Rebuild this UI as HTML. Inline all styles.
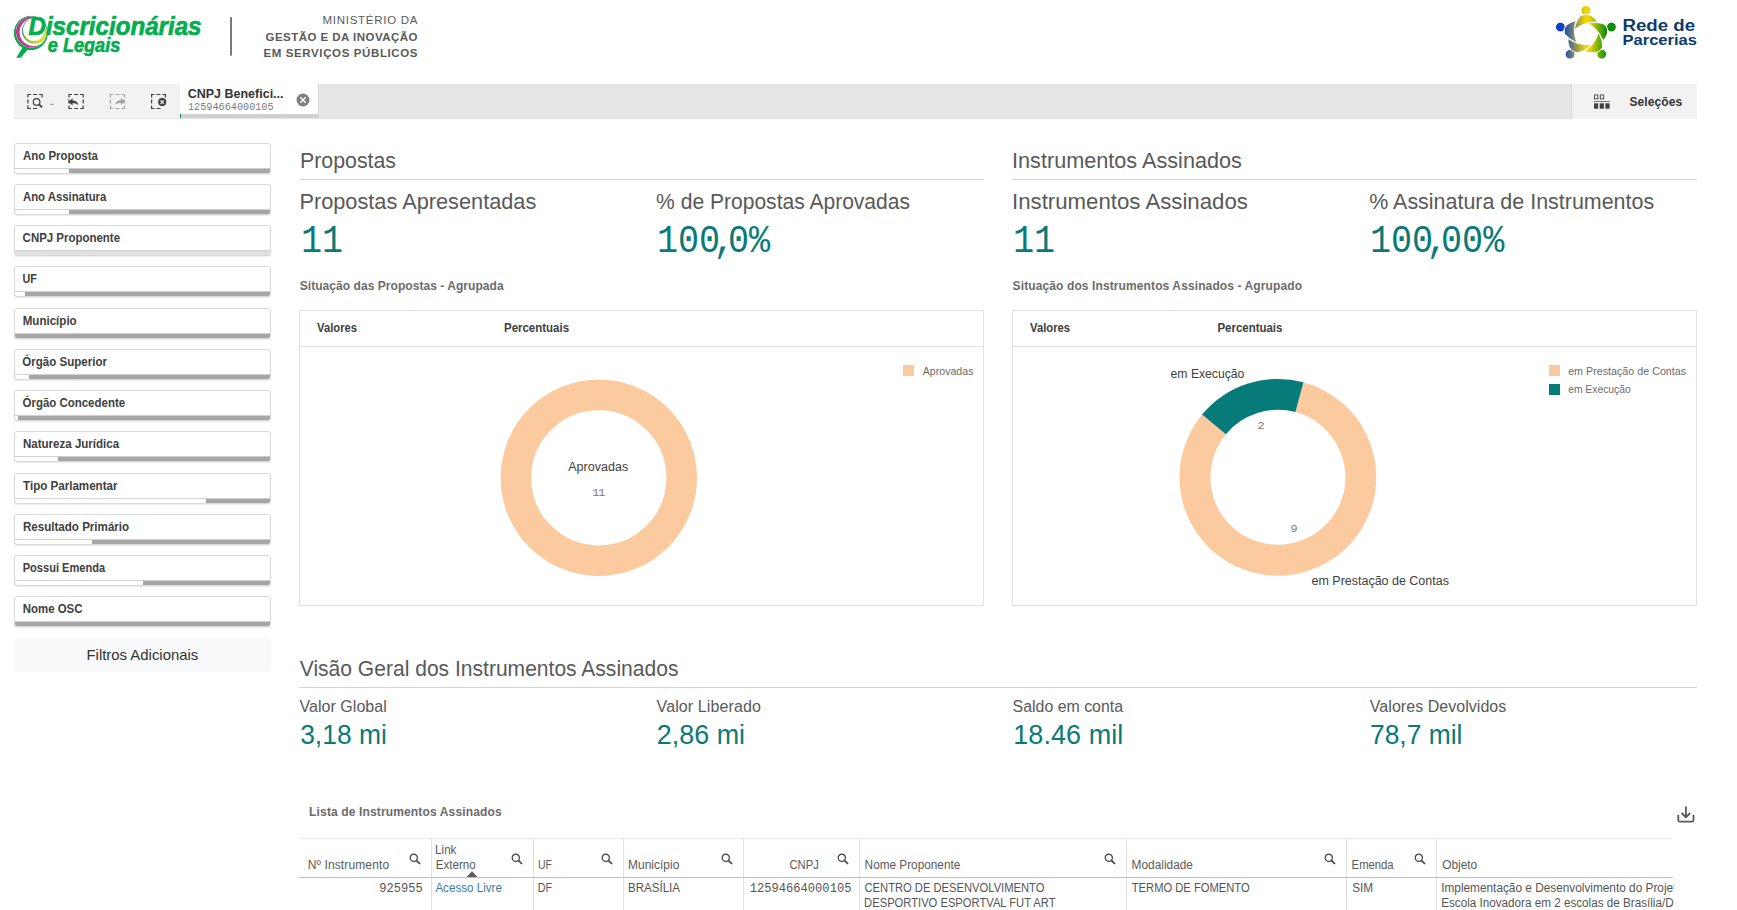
<!DOCTYPE html>
<html lang="pt-BR">
<head>
<meta charset="utf-8">
<title>Discricionárias e Legais - Rede de Parcerias</title>
<style>
html,body{margin:0;padding:0;background:#fff;}
body{width:1737px;height:910px;overflow:hidden;position:relative;font-family:"Liberation Sans",sans-serif;color:#404040;}
.abs{position:absolute;white-space:nowrap;}
.sx{display:inline-block;transform-origin:0 50%;white-space:nowrap;}

/* header */
#hdr{position:absolute;left:0;top:0;width:1737px;height:84px;}
.min{position:absolute;right:1320px;text-align:right;white-space:nowrap;color:#595959;font-size:12px;letter-spacing:1.1px;line-height:14px;}
.min b{font-weight:bold;}

/* toolbar */
#tb{position:absolute;left:14px;top:84px;width:1683px;height:35px;background:#e6e6e6;border-bottom:1px solid #dfe3e6;box-sizing:border-box;}
#tb .icons{position:absolute;left:0;top:0;width:166px;height:34px;background:#f2f2f2;}
#tb .tab{position:absolute;left:166px;top:0;width:139px;height:34px;background:#fff;border-right:1px solid #d9d9d9;box-sizing:border-box;}
#tb .tab .bar{position:absolute;left:0;bottom:0;width:100%;height:4px;background:#d0d0d0;}
#tb .tab .bar i{position:absolute;left:0;top:0;width:1px;height:4px;background:#009845;}
#tb .tab .t1{position:absolute;left:8px;top:3px;font-weight:bold;font-size:12.5px;color:#333;white-space:nowrap;}
#tb .tab .t2{position:absolute;left:8px;top:17.6px;font-family:"Liberation Mono",monospace;font-size:10.2px;color:#7a7a7a;white-space:nowrap;}
#tb .sel{position:absolute;right:0;top:0;width:126px;height:35px;background:#f2f2f2;border-left:1px solid #d9d9d9;box-sizing:border-box;}
#tb .sel>span{position:absolute;left:57px;top:10.5px;font-weight:bold;font-size:12px;color:#333;white-space:nowrap;}

/* sidebar */
.fb{position:absolute;left:14px;width:257px;height:31px;box-sizing:border-box;border:1px solid #d9d9d9;border-radius:3px;background:#fff;overflow:hidden;box-shadow:0 1px 1px rgba(0,0,0,.08);}
.fb .l{position:absolute;left:8px;top:5px;font-weight:bold;font-size:12px;color:#404040;white-space:nowrap;}
.fb .b{position:absolute;left:0;right:0;bottom:0;height:4px;background:#a6a6a6;border-top:1px solid #d0d0d0;}
.fb .b i{position:absolute;left:0;top:0;height:4px;background:#fff;}
#fa{position:absolute;left:14px;top:638px;width:257px;height:34px;background:#f8f9fa;border-radius:4px;text-align:center;line-height:34px;font-size:15px;color:#333;}

/* sections */
.st{position:absolute;font-size:22.7px;color:#595959;white-space:nowrap;}
.hr{position:absolute;height:1px;background:#d4d4d4;}
.kl{position:absolute;font-size:22.7px;color:#595959;white-space:nowrap;}
.kv{position:absolute;font-family:"Liberation Mono",monospace;font-size:38.5px;color:#0a7a78;white-space:nowrap;}
.kv .sx{transform:translateX(0.9px) scaleX(.913);}
.kv .cm{margin:0 -7.3px;}
.sub{position:absolute;font-size:12px;font-weight:bold;color:#6b6b6b;white-space:nowrap;}
.box{position:absolute;box-sizing:border-box;border:1px solid #e0e0e0;background:#fff;}
.box .th{position:absolute;left:0;top:0;right:0;height:36px;border-bottom:1px solid #e0e0e0;box-sizing:border-box;}
.box .th>span{position:absolute;top:10px;font-weight:bold;font-size:12px;color:#404040;white-space:nowrap;}
.lg{position:absolute;font-size:11px;color:#6b6b6b;white-space:nowrap;}
.lg i{position:absolute;left:-19px;top:1px;width:11px;height:11px;}
.dl{position:absolute;font-size:12.5px;color:#404040;white-space:nowrap;}
.dv{position:absolute;font-family:"Liberation Mono",monospace;font-size:11.8px;color:#787878;white-space:nowrap;}

.k2l{position:absolute;font-size:16px;color:#595959;white-space:nowrap;}
.k2v{position:absolute;font-size:27px;color:#0a7a78;white-space:nowrap;}

/* table */
#tbl{position:absolute;left:299px;top:838px;width:1374.7px;height:72px;overflow:hidden;font-size:12px;color:#555;}
#tbl .vl{position:absolute;top:0;width:1px;height:72px;background:#e0e0e0;}
#tbl .hl{position:absolute;left:0;top:39px;width:1374px;height:1px;background:#bdbdbd;}
#tbl .tl{position:absolute;left:0;top:0;width:1374px;height:1px;background:#ececec;}
#tbl .h{position:absolute;white-space:nowrap;color:#595959;}
#tbl .c{position:absolute;white-space:nowrap;}
#tbl .m{font-family:"Liberation Mono",monospace;font-size:12.1px;}
#tbl svg.s{position:absolute;top:14.6px;margin-left:-0.5px;}
</style>
</head>
<body>
<div id="hdr">
<svg width="1737" height="84" viewBox="0 0 1737 84" style="position:absolute;left:0;top:0">
<defs>
<linearGradient id="gstar" gradientUnits="userSpaceOnUse" x1="1557" y1="0" x2="1614" y2="0">
<stop offset="0" stop-color="#0b3fc6"/><stop offset="0.12" stop-color="#1446c0"/><stop offset="0.5" stop-color="#f4d500"/><stop offset="0.58" stop-color="#e6d400"/><stop offset="0.86" stop-color="#12900f"/><stop offset="1" stop-color="#0a8a0a"/>
</linearGradient>
<linearGradient id="gyl" gradientUnits="userSpaceOnUse" x1="23" y1="24" x2="46" y2="38">
<stop offset="0" stop-color="#0a7a6a"/><stop offset="0.45" stop-color="#8cc63f"/><stop offset="1" stop-color="#e9e21c"/>
</linearGradient>
</defs>
<!-- magnifier logo -->
<clipPath id="cpo"><circle cx="30.9" cy="33" r="17.2"/></clipPath>
<clipPath id="cpm"><circle cx="31.4" cy="32" r="15.5"/></clipPath>
<clipPath id="cpy"><polygon points="18,24.5 27.5,18 34.7,31 51,28 51,48 18,48"/></clipPath>
<path fill="#04ad50" fill-rule="evenodd" clip-path="url(#cpo)" d="M13.70,33 a17.2,17.2 0 1 0 34.40,0 a17.2,17.2 0 1 0 -34.40,0Z M15.90,32 a15.5,15.5 0 1 1 31.00,0 a15.5,15.5 0 1 1 -31.00,0Z"/>
<path fill="#c4368f" fill-rule="evenodd" clip-path="url(#cpm)" d="M15.90,32 a15.5,15.5 0 1 0 31.00,0 a15.5,15.5 0 1 0 -31.00,0Z M19.60,32.2 a14.0,14.0 0 1 1 28.00,0 a14.0,14.0 0 1 1 -28.00,0Z"/>
<path fill="url(#gyl)" fill-rule="evenodd" clip-path="url(#cpy)" d="M22.00,31.0 a12.7,12.7 0 1 0 25.40,0 a12.7,12.7 0 1 0 -25.40,0Z M23.00,30.0 a11.0,11.0 0 1 1 22.00,0 a11.0,11.0 0 1 1 -22.00,0Z"/>
<polygon fill="#04ad50" points="23.2,46.6 28.2,49 20.9,57.8 16.2,57.8"/>
<text x="28.5" y="34.8" font-family="'Liberation Sans',sans-serif" font-weight="bold" font-style="italic" font-size="26.5" fill="#04ad50" stroke="#04ad50" stroke-width="0.7" textLength="173" lengthAdjust="spacingAndGlyphs">Discricionárias</text>
<text x="47.8" y="51.7" font-family="'Liberation Sans',sans-serif" font-weight="bold" font-style="italic" font-size="19.3" fill="#04ad50" stroke="#04ad50" stroke-width="0.6" textLength="72.5" lengthAdjust="spacingAndGlyphs">e Legais</text>
<rect x="230.2" y="17.2" width="1.6" height="38.4" fill="#595959"/>
<!-- ministerio -->
<g font-family="'Liberation Sans',sans-serif" fill="#5a5a5a" text-anchor="end">
<text x="417.5" y="24.3" font-size="11.5" textLength="95" lengthAdjust="spacing">MINISTÉRIO DA</text>
<text x="417.5" y="40.6" font-size="11.5" font-weight="bold" textLength="152" lengthAdjust="spacing">GESTÃO E DA INOVAÇÃO</text>
<text x="417.5" y="57" font-size="11.5" font-weight="bold" textLength="154" lengthAdjust="spacing">EM SERVIÇOS PÚBLICOS</text>
</g>
<!-- rede de parcerias -->
<g fill="url(#gstar)" stroke="#fff" stroke-width="1">
<circle cx="1585.9" cy="10.4" r="4.9"/>
<path d="M1580.6,15.6 Q1585.9,12.8 1591.2,15.6 Q1595.4,18.3 1597.9,22.0 C1589.2,22.0 1581.7,24.0 1574.1,30.0 Q1575.7,20.6 1580.6,15.6Z"/>
<circle cx="1611.4" cy="27.1" r="4.9"/>
<path d="M1604.3,24.2 Q1608.9,27.9 1607.6,33.3 Q1606.1,37.7 1602.9,41.0 C1600.2,33.6 1595.8,27.7 1587.1,23.1 Q1597.5,21.5 1604.3,24.2Z"/>
<circle cx="1601.7" cy="54.2" r="4.9"/>
<path d="M1602.6,47.1 Q1600.1,52.2 1594.0,52.8 Q1588.8,52.8 1584.4,51.1 C1591.4,46.6 1596.2,40.9 1598.4,32.1 Q1603.3,40.5 1602.6,47.1Z"/>
<circle cx="1570.1" cy="54.2" r="4.9"/>
<path d="M1577.8,52.8 Q1571.7,52.2 1569.2,47.1 Q1567.5,42.7 1568.0,38.4 C1575.0,43.0 1582.4,45.4 1592.4,44.6 Q1585.0,51.3 1577.8,52.8Z"/>
<circle cx="1560.4" cy="27.1" r="4.9"/>
<path d="M1564.2,33.3 Q1562.9,27.9 1567.5,24.2 Q1571.6,21.4 1576.3,20.4 C1573.6,27.9 1573.4,34.9 1577.4,43.3 Q1568.0,39.0 1564.2,33.3Z"/>
</g>
<g font-family="'Liberation Sans',sans-serif" font-weight="bold" fill="#0c3b70">
<text x="1622.5" y="30.9" font-size="16" textLength="72.5" lengthAdjust="spacingAndGlyphs">Rede de</text>
<text x="1622.5" y="45.3" font-size="15.2" textLength="74.5" lengthAdjust="spacingAndGlyphs">Parcerias</text>
</g>
</svg>
</div>
<div id="tb">
<div class="icons">
<svg width="166" height="34" viewBox="14 84 166 34" style="position:absolute;left:0;top:0">
<g fill="none" stroke="#404040" stroke-width="1.2">
<path d="M42.1,97.4 V94.5 H39.2 M37.1,94.5 H33.1 M31,94.5 H27.9 V97.4 M27.9,99.5 V103.5 M27.9,105.6 V108.5 H31 M33.1,108.5 H37.1"/>
<rect x="69" y="94.5" width="14.2" height="14" stroke-dasharray="6 2.1 4 2.1" stroke-dashoffset="3" pathLength="56.8"/>
<rect x="110.4" y="94.5" width="14" height="14" stroke-dasharray="6 2.1 4 2.1" stroke-dashoffset="3" pathLength="56.8" stroke="#a6a6a6"/>
<path d="M165.4,97.4 V94.5 H162.5 M160.4,94.5 H156.4 M154.4,94.5 H151.6 V97.4 M151.6,99.5 V103.5 M151.6,105.6 V108.5 H154.5 M156.4,108.5 H160.6"/>
</g>
<circle cx="36.6" cy="101.9" r="3.3" fill="none" stroke="#404040" stroke-width="1.2"/>
<path d="M39,104.4 L42,107.4" stroke="#404040" stroke-width="1.9" fill="none"/>
<rect x="50.3" y="103.8" width="3.2" height="1" fill="#8a8a8a"/>
<path d="M68.4,101.9 L72.6,98.3 V100.5 C75.9,100.5 77.9,102 78.3,105.2 C77,103.7 75.4,103.3 72.6,103.3 V105.4 Z" fill="#404040"/>
<path d="M125.1,101.6 L120.9,98 V100.2 C117.6,100.2 115.6,101.7 115.2,104.9 C116.5,103.4 118.1,103 120.9,103 V105.1 Z" fill="#a0a0a0"/>
<circle cx="162.2" cy="102.1" r="4.1" fill="#404040"/>
<path d="M160.5,100.4 L163.9,103.8 M163.9,100.4 L160.5,103.8" stroke="#f2f2f2" stroke-width="1.2"/>
</svg>
</div>
<div class="tab">
<div class="t1"><span class="sx" id="tabt" style="transform:translateX(-0.25px) scaleX(0.9990)">CNPJ Benefici...</span></div>
<div class="t2">12594664000105</div>
<svg width="14" height="14" viewBox="0 0 14 14" style="position:absolute;left:115.8px;top:9px"><circle cx="7" cy="7" r="6.5" fill="#7f7f7f"/><path d="M4.3,4.3 L9.7,9.7 M9.7,4.3 L4.3,9.7" stroke="#fff" stroke-width="1.4"/></svg>
<div class="bar"><i></i></div>
</div>
<div class="sel">
<svg width="18" height="16" viewBox="0 0 18 16" style="position:absolute;left:21.3px;top:10px">
<rect x="1.5" y="0.9" width="3.4" height="4" fill="none" stroke="#404040" stroke-width="0.9"/>
<rect x="7.3" y="0.9" width="3.4" height="4" fill="none" stroke="#404040" stroke-width="0.9"/>
<rect x="1" y="7" width="15.6" height="0.8" fill="#595959"/>
<rect x="1" y="9.3" width="4.2" height="5.4" fill="#404040"/>
<rect x="6.7" y="9.3" width="4.2" height="5.4" fill="#404040"/>
<rect x="12.4" y="9.3" width="4.2" height="5.4" fill="#404040"/>
</svg>
<span><span class="sx" id="selt" style="letter-spacing:0.09px;transform:translateX(0.40px)">Seleções</span></span>
</div>
</div>
<div id="side">
<div class="fb" style="top:143px"><div class="l"><span class="sx" style="transform:scaleX(0.9519)">Ano Proposta</span></div><div class="b"><i style="width:54px"></i></div></div>
<div class="fb" style="top:184px"><div class="l"><span class="sx" style="transform:translateX(-0.05px) scaleX(0.9449)">Ano Assinatura</span></div><div class="b"><i style="width:54px"></i></div></div>
<div class="fb" style="top:225px"><div class="l"><span class="sx" style="transform:translateX(-0.40px) scaleX(0.9549)">CNPJ Proponente</span></div><div class="b" style="background:#e0e0e0"></div></div>
<div class="fb" style="top:266px"><div class="l"><span class="sx" style="transform:translateX(-0.50px) scaleX(0.9000)">UF</span></div><div class="b"><i style="width:10px"></i></div></div>
<div class="fb" style="top:308px"><div class="l"><span class="sx" style="transform:translateX(-0.25px) scaleX(0.9625)">Município</span></div><div class="b"><i style="width:0px"></i></div></div>
<div class="fb" style="top:349px"><div class="l"><span class="sx" style="transform:translateX(-0.75px) scaleX(0.9625)">Órgão Superior</span></div><div class="b"><i style="width:14px"></i></div></div>
<div class="fb" style="top:390px"><div class="l"><span class="sx" style="transform:translateX(-0.50px) scaleX(0.9556)">Órgão Concedente</span></div><div class="b"><i style="width:3px"></i></div></div>
<div class="fb" style="top:431px"><div class="l"><span class="sx" style="transform:translateX(-0.10px) scaleX(0.9624)">Natureza Jurídica</span></div><div class="b"><i style="width:43px"></i></div></div>
<div class="fb" style="top:473px"><div class="l"><span class="sx" style="transform:translateX(0.11px) scaleX(0.9646)">Tipo Parlamentar</span></div><div class="b"><i style="width:191px"></i></div></div>
<div class="fb" style="top:514px"><div class="l"><span class="sx" style="transform:translateX(-0.10px) scaleX(0.9655)">Resultado Primário</span></div><div class="b"><i style="width:77px"></i></div></div>
<div class="fb" style="top:555px"><div class="l"><span class="sx" style="transform:translateX(-0.25px) scaleX(0.9211)">Possui Emenda</span></div><div class="b"><i style="width:128px"></i></div></div>
<div class="fb" style="top:596px"><div class="l"><span class="sx" style="transform:translateX(-0.20px) scaleX(0.9524)">Nome OSC</span></div><div class="b"><i style="width:0px"></i></div></div>
<div id="fa"><span class="sx" style="transform:translateX(0.10px) scaleX(0.9929);transform-origin:50% 50%">Filtros Adicionais</span></div>
</div>
<div id="main">
<div class="st" style="left:300px;top:147.2px"><span class="sx" style="transform:translateX(0.01px) scaleX(0.9396)">Propostas</span></div>
<div class="hr" style="left:299px;top:179px;width:685px"></div>
<div class="kl" style="left:300px;top:188.1px"><span class="sx" style="transform:translateX(-0.58px) scaleX(0.9583)">Propostas Apresentadas</span></div>
<div class="kv" style="left:300px;top:220px"><span class="sx">11</span></div>
<div class="kl" style="left:656px;top:188.1px"><span class="sx" style="transform:translateX(0.12px) scaleX(0.9277)">% de Propostas Aprovadas</span></div>
<div class="kv" style="left:656px;top:220px"><span class="sx">100<span class="cm">,</span>0%</span></div>
<div class="sub" style="left:300px;top:279px"><span class="sx" style="letter-spacing:0.05px;transform:translateX(-0.25px)">Situação das Propostas - Agrupada</span></div>
<div class="box" style="left:299px;top:310px;width:685px;height:296px"><div class="th"><span style="left:17px"><span class="sx" style="transform:translateX(0.12px) scaleX(0.9360)">Valores</span></span><span style="left:204px"><span class="sx" style="transform:scaleX(0.9559)">Percentuais</span></span></div></div>
<svg class="abs" style="left:299px;top:346px" width="686" height="259" viewBox="299 346 686 259">
<circle cx="598.8" cy="477.8" r="82.9" fill="none" stroke="#fbcb9f" stroke-width="30.6"/>
</svg>
<div class="dl" style="left:568px;top:459.7px"><span class="sx" style="letter-spacing:0.05px;transform:translateX(0.20px)">Aprovadas</span></div>
<div class="dv" style="left:592.2px;top:485.6px;letter-spacing:-0.9px">11</div>
<div class="lg" style="left:922px;top:364.7px"><i style="background:#fbcb9f;top:0.3px"></i><span class="sx" style="transform:translateX(0.70px) scaleX(0.9660)">Aprovadas</span></div>
<div class="st" style="left:1012px;top:147.2px"><span class="sx" style="transform:translateX(0.05px) scaleX(0.9542)">Instrumentos Assinados</span></div>
<div class="hr" style="left:1012px;top:179px;width:685px"></div>
<div class="kl" style="left:1012px;top:188.1px"><span class="sx" style="transform:translateX(0.02px) scaleX(0.9792)">Instrumentos Assinados</span></div>
<div class="kv" style="left:1012px;top:220px"><span class="sx">11</span></div>
<div class="kl" style="left:1369px;top:188.1px"><span class="sx" style="transform:translateX(0.25px) scaleX(0.9452)">% Assinatura de Instrumentos</span></div>
<div class="kv" style="left:1369px;top:220px"><span class="sx">100<span class="cm">,</span>00%</span></div>
<div class="sub" style="left:1012px;top:279px"><span class="sx" style="letter-spacing:0.11px;transform:translateX(0.60px)">Situação dos Instrumentos Assinados - Agrupado</span></div>
<div class="box" style="left:1012px;top:310px;width:685px;height:296px"><div class="th"><span style="left:17px"><span class="sx" style="transform:translateX(0.05px) scaleX(0.9372)">Valores</span></span><span style="left:204px"><span class="sx" style="transform:translateX(0.40px) scaleX(0.9559)">Percentuais</span></span></div></div>
<svg class="abs" style="left:1012px;top:346px" width="686" height="259" viewBox="1012 346 686 259">
<path d="M1303.45,382.28 A98.4,98.4 0 1 1 1202.08,414.58 L1225.89,434.28 A67.5,67.5 0 1 0 1295.43,412.12Z" fill="#fbcb9f"/>
<path d="M1202.08,414.58 A98.4,98.4 0 0 1 1303.45,382.28 L1295.43,412.12 A67.5,67.5 0 0 0 1225.89,434.28Z" fill="#077b79"/>
</svg>
<div class="dl" style="left:1170px;top:367px"><span class="sx" style="transform:translateX(0.60px) scaleX(0.9737)">em Execução</span></div>
<div class="dl" style="left:1311px;top:573.7px"><span class="sx" style="transform:translateX(0.50px) scaleX(0.9986)">em Prestação de Contas</span></div>
<div class="dv" style="left:1257.6px;top:418.6px">2</div>
<div class="dv" style="left:1290.6px;top:521.8px">9</div>
<div class="lg" style="left:1568px;top:364.7px"><i style="background:#fbcb9f;top:0.3px"></i><span class="sx" style="transform:translateX(0.15px) scaleX(0.9744)">em Prestação de Contas</span></div>
<div class="lg" style="left:1568px;top:382.6px"><i style="background:#077b79;top:1.4px"></i><span class="sx" style="transform:translateX(0.15px) scaleX(0.9388)">em Execução</span></div>
<div class="st" style="left:300px;top:655.3px"><span class="sx" style="transform:translateX(-0.25px) scaleX(0.9277)">Visão Geral dos Instrumentos Assinados</span></div>
<div class="hr" style="left:299px;top:687px;width:1398px"></div>
<div class="k2l" style="left:300px;top:697.5px"><span class="sx" style="letter-spacing:0.02px;transform:translateX(-0.38px)">Valor Global</span></div>
<div class="k2v" style="left:300px;top:719.6px"><span class="sx" style="transform:translateX(0.15px) scaleX(0.9797)">3,18 mi</span></div>
<div class="k2l" style="left:656px;top:697.5px"><span class="sx" style="letter-spacing:0.10px;transform:translateX(0.62px)">Valor Liberado</span></div>
<div class="k2v" style="left:656px;top:719.6px"><span class="sx" style="transform:translateX(0.85px) scaleX(0.9965)">2,86 mi</span></div>
<div class="k2l" style="left:1012px;top:697.5px"><span class="sx" style="transform:translateX(0.62px) scaleX(0.9933)">Saldo em conta</span></div>
<div class="k2v" style="left:1012px;top:719.6px"><span class="sx" style="letter-spacing:0.06px;transform:translateX(1.25px)">18.46 mil</span></div>
<div class="k2l" style="left:1369px;top:697.5px"><span class="sx" style="letter-spacing:0.04px;transform:translateX(0.85px)">Valores Devolvidos</span></div>
<div class="k2v" style="left:1369px;top:719.6px"><span class="sx" style="transform:translateX(1.00px) scaleX(0.9777)">78,7 mil</span></div>
<div class="sub" style="left:309px;top:805px"><span class="sx" style="letter-spacing:0.14px;transform:translateX(0.12px)">Lista de Instrumentos Assinados</span></div>
<svg class="abs" style="left:1676px;top:804px" width="20" height="20" viewBox="0 0 20 20"><g fill="none" stroke="#595959" stroke-width="1.8" stroke-linejoin="round"><path d="M9.9,2.4 V13 M5.6,9 L9.9,13.3 L14.2,9"/><path d="M2.3,11 V16.2 Q2.3,17.7 3.8,17.7 H16 Q17.5,17.7 17.5,16.2 V11"/></g></svg>
<div id="tbl">
<div class="tl"></div>
<div class="vl" style="left:132px"></div>
<div class="vl" style="left:234px"></div>
<div class="vl" style="left:324px"></div>
<div class="vl" style="left:444px"></div>
<div class="vl" style="left:560px"></div>
<div class="vl" style="left:827px"></div>
<div class="vl" style="left:1047px"></div>
<div class="vl" style="left:1137px"></div>
<div class="hl"></div>
<div class="h" style="left:9px;top:20px"><span class="sx" style="letter-spacing:0.12px;transform:translateX(-0.25px)">Nº Instrumento</span></div>
<svg class="s" style="left:110px" width="12" height="12" viewBox="0 0 12 12"><circle cx="4.8" cy="4.8" r="3.6" fill="none" stroke="#404040" stroke-width="1.2"/><path d="M7.4,7.4 L11,11" stroke="#404040" stroke-width="1.7"/></svg>
<div class="h" style="left:137px;top:20px"><span class="sx" style="transform:translateX(-0.25px) scaleX(0.9643)">Externo</span></div>
<svg class="s" style="left:212px" width="12" height="12" viewBox="0 0 12 12"><circle cx="4.8" cy="4.8" r="3.6" fill="none" stroke="#404040" stroke-width="1.2"/><path d="M7.4,7.4 L11,11" stroke="#404040" stroke-width="1.7"/></svg>
<div class="h" style="left:239px;top:20px"><span class="sx" style="transform:scaleX(0.8750)">UF</span></div>
<svg class="s" style="left:302px" width="12" height="12" viewBox="0 0 12 12"><circle cx="4.8" cy="4.8" r="3.6" fill="none" stroke="#404040" stroke-width="1.2"/><path d="M7.4,7.4 L11,11" stroke="#404040" stroke-width="1.7"/></svg>
<div class="h" style="left:329px;top:20px"><span class="sx">Município</span></div>
<svg class="s" style="left:422px" width="12" height="12" viewBox="0 0 12 12"><circle cx="4.8" cy="4.8" r="3.6" fill="none" stroke="#404040" stroke-width="1.2"/><path d="M7.4,7.4 L11,11" stroke="#404040" stroke-width="1.7"/></svg>
<div class="h" style="left:490px;top:20px"><span class="sx" style="transform:translateX(0.50px) scaleX(0.9355)">CNPJ</span></div>
<svg class="s" style="left:538px" width="12" height="12" viewBox="0 0 12 12"><circle cx="4.8" cy="4.8" r="3.6" fill="none" stroke="#404040" stroke-width="1.2"/><path d="M7.4,7.4 L11,11" stroke="#404040" stroke-width="1.7"/></svg>
<div class="h" style="left:565px;top:20px"><span class="sx" style="transform:translateX(0.62px) scaleX(0.9821)">Nome Proponente</span></div>
<svg class="s" style="left:805px" width="12" height="12" viewBox="0 0 12 12"><circle cx="4.8" cy="4.8" r="3.6" fill="none" stroke="#404040" stroke-width="1.2"/><path d="M7.4,7.4 L11,11" stroke="#404040" stroke-width="1.7"/></svg>
<div class="h" style="left:832px;top:20px"><span class="sx" style="transform:translateX(0.62px) scaleX(0.9879)">Modalidade</span></div>
<svg class="s" style="left:1025px" width="12" height="12" viewBox="0 0 12 12"><circle cx="4.8" cy="4.8" r="3.6" fill="none" stroke="#404040" stroke-width="1.2"/><path d="M7.4,7.4 L11,11" stroke="#404040" stroke-width="1.7"/></svg>
<div class="h" style="left:1052px;top:20px"><span class="sx" style="transform:translateX(0.62px) scaleX(0.9389)">Emenda</span></div>
<svg class="s" style="left:1115px" width="12" height="12" viewBox="0 0 12 12"><circle cx="4.8" cy="4.8" r="3.6" fill="none" stroke="#404040" stroke-width="1.2"/><path d="M7.4,7.4 L11,11" stroke="#404040" stroke-width="1.7"/></svg>
<div class="h" style="left:1142px;top:20px"><span class="sx" style="transform:translateX(1.25px) scaleX(0.9861)">Objeto</span></div>
<div class="h" style="left:137px;top:5px"><span class="sx" style="transform:translateX(-0.88px) scaleX(0.9659)">Link</span></div>
<svg class="abs" style="left:167px;top:33px" width="12" height="6" viewBox="0 0 12 6"><path d="M0.5,6 L6,0.3 L11.5,6Z" fill="#595959"/></svg>
<div class="c m" style="left:80.3px;top:43.8px">925955</div>
<div class="c" style="left:137px;top:43px;color:#3a7ca5"><span class="sx" style="transform:translateX(-0.62px) scaleX(0.9674)">Acesso Livre</span></div>
<div class="c" style="left:239px;top:43px"><span class="sx" style="transform:translateX(-0.35px) scaleX(0.8937)">DF</span></div>
<div class="c" style="left:329px;top:43px"><span class="sx" style="transform:scaleX(0.9630)">BRASÍLIA</span></div>
<div class="c m" style="left:450.8px;top:43.8px">12594664000105</div>
<div class="c" style="left:565px;top:43px"><span class="sx" style="transform:translateX(0.50px) scaleX(0.9326)">CENTRO DE DESENVOLVIMENTO</span></div>
<div class="c" style="left:565px;top:58px"><span class="sx" style="transform:translateX(0.12px) scaleX(0.9329)">DESPORTIVO ESPORTVAL FUT ART</span></div>
<div class="c" style="left:832px;top:43px"><span class="sx" style="transform:translateX(0.75px) scaleX(0.9325)">TERMO DE FOMENTO</span></div>
<div class="c" style="left:1052px;top:43px"><span class="sx" style="transform:translateX(1.25px) scaleX(0.9762)">SIM</span></div>
<div class="c" style="left:1142px;top:43px"><span class="sx" style="transform:translateX(0.21px) scaleX(0.9848)">Implementação e Desenvolvimento do Projeto</span></div>
<div class="c" style="left:1142px;top:58px"><span class="sx" style="transform:translateX(0.22px) scaleX(0.9731)">Escola Inovadora em 2 escolas de Brasília/DF</span></div>
</div>
</div>
</body>
</html>
